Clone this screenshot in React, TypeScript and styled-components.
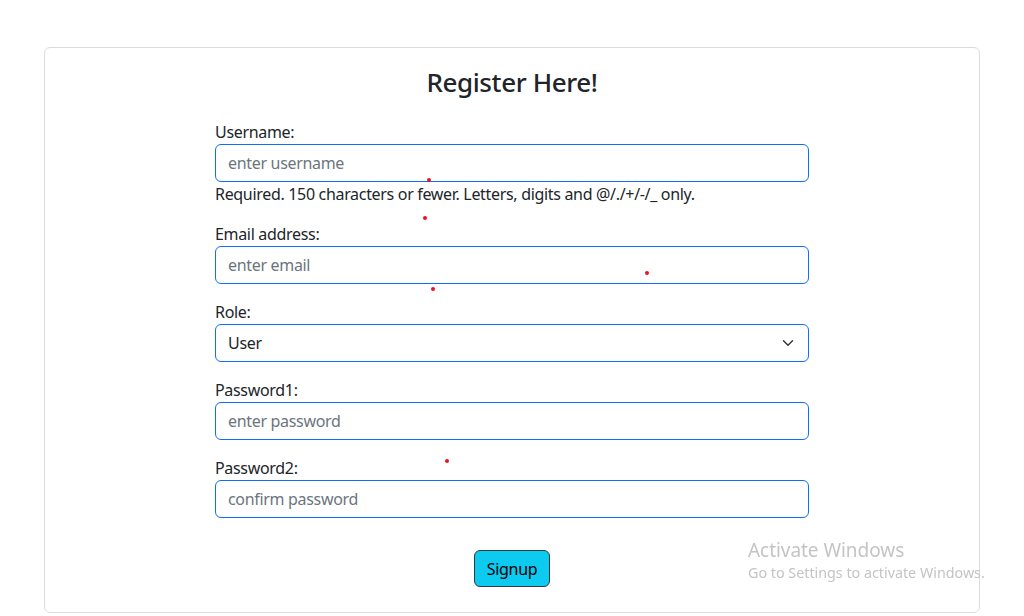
import React from "react";
import styled, { createGlobalStyle } from "styled-components";

const GlobalStyle = createGlobalStyle`
  html, body { margin: 0; padding: 0; background: #fff; }
  body {
    font-family: "Segoe UI", "Noto Sans", "Liberation Sans", sans-serif;
    font-size: 16px;
    line-height: 1.5;
    letter-spacing: -0.32px;
    color: #212529;
  }
  * { box-sizing: border-box; }
`;

const Container = styled.div`
  width: 960px;
  margin: 0 auto;
  padding: 47px 12px 0;
`;

const Card = styled.div`
  border: 1px solid #dcdcdc;
  border-radius: 6px;
  padding: 18px 16px 23px;
  height: 566px;
`;

const Title = styled.h3`
  margin: 0 0 22px;
  text-align: center;
  font-size: 26px;
  font-weight: 500;
  line-height: 32px;
  letter-spacing: -0.4px;
`;

const Form = styled.form`
  width: 594px;
  margin: 0 auto;
  display: flex;
  flex-direction: column;
`;

const Field = styled.div`
  display: flex;
  flex-direction: column;
  margin-bottom: 16px;
`;

const Label = styled.label`
  display: block;
  line-height: 24px;
`;

const Input = styled.input`
  height: 38px;
  width: 100%;
  padding: 6px 12px;
  font: inherit;
  letter-spacing: inherit;
  color: #212529;
  border: 1px solid #0d6efd;
  border-radius: 6px;
  outline: none;
  &::placeholder { color: #6c757d; }
`;

const Select = styled.select`
  height: 38px;
  width: 100%;
  padding: 6px 36px 6px 12px;
  font: inherit;
  letter-spacing: inherit;
  color: #212529;
  background-color: #fff;
  border: 1px solid #0d6efd;
  border-radius: 6px;
  appearance: none;
  outline: none;
  background-image: url("data:image/svg+xml,%3csvg xmlns='http://www.w3.org/2000/svg' viewBox='0 0 16 16'%3e%3cpath fill='none' stroke='%23343a40' stroke-linecap='round' stroke-linejoin='round' stroke-width='2' d='m2 5 6 6 6-6'/%3e%3c/svg%3e");
  background-repeat: no-repeat;
  background-position: right 12px center;
  background-size: 16px 12px;
`;

const Help = styled.div`
  line-height: 24px;
`;

const ButtonRow = styled.div`
  display: flex;
  justify-content: center;
  margin-top: 16px;
`;

const Button = styled.button`
  font: inherit;
  letter-spacing: inherit;
  color: #000;
  background: #0dcaf0;
  border: 1px solid #343a40;
  border-radius: 6px;
  padding: 5px 12px;
  height: 37px;
  cursor: pointer;
`;

const Dot = styled.span<{ $x: number; $y: number }>`
  position: absolute;
  left: ${(p) => p.$x - 2}px;
  top: ${(p) => p.$y - 2}px;
  width: 4px;
  height: 4px;
  border-radius: 50%;
  background: #e8141e;
`;

const Watermark = styled.div`
  position: fixed;
  left: 748px;
  top: 537px;
  color: #c4c4c4;
  pointer-events: none;
`;

const WmTitle = styled.div`
  font-size: 19px;
  line-height: 26px;
  letter-spacing: -0.05px;
`;

const WmSub = styled.div`
  font-size: 14.3px;
  line-height: 20px;
  letter-spacing: 0;
`;

const dots: Array<[number, number]> = [
  [429, 180],
  [425, 218],
  [433, 289],
  [647, 273],
  [447, 461],
];

export default function App() {
  return (
    <>
      <GlobalStyle />
      <Container>
        <Card>
          <Title>Register Here!</Title>
          <Form onSubmit={(e) => e.preventDefault()}>
            <Field>
              <Label htmlFor="username">Username:</Label>
              <Input id="username" placeholder="enter username" />
              <Help>Required. 150 characters or fewer. Letters, digits and @/./+/-/_ only.</Help>
            </Field>
            <Field>
              <Label htmlFor="email">Email address:</Label>
              <Input id="email" placeholder="enter email" />
            </Field>
            <Field>
              <Label htmlFor="role">Role:</Label>
              <Select id="role" defaultValue="User">
                <option>User</option>
                <option>Admin</option>
              </Select>
            </Field>
            <Field>
              <Label htmlFor="p1">Password1:</Label>
              <Input id="p1" type="password" placeholder="enter password" />
            </Field>
            <Field>
              <Label htmlFor="p2">Password2:</Label>
              <Input id="p2" type="password" placeholder="confirm password" />
            </Field>
            <ButtonRow>
              <Button type="submit">Signup</Button>
            </ButtonRow>
          </Form>
        </Card>
      </Container>
      {dots.map(([x, y], i) => (
        <Dot key={i} $x={x} $y={y} />
      ))}
      <Watermark>
        <WmTitle>Activate Windows</WmTitle>
        <WmSub>Go to Settings to activate Windows.</WmSub>
      </Watermark>
    </>
  );
}
